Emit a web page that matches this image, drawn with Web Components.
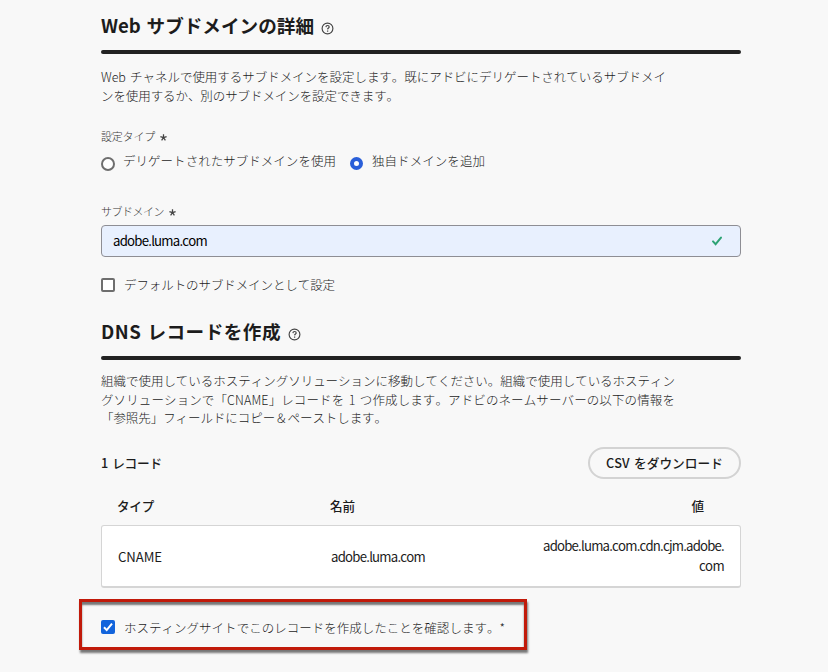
<!DOCTYPE html>
<html lang="ja">
<head>
<meta charset="utf-8">
<title>Web サブドメインの詳細</title>
<style>
html,body{margin:0;background:#f8f8f8}
body{width:828px;height:672px;overflow:hidden;font-family:"Noto Sans CJK JP",sans-serif;color:#1c1c1c}
</style>
</head>
<body>
<subdomain-form></subdomain-form>
<script>
const define = (name, html, setup) => {
  const t = document.createElement('template');
  t.innerHTML = html;
  customElements.define(name, class extends HTMLElement {
    constructor() {
      super();
      this.attachShadow({mode: 'open'}).append(t.content.cloneNode(true));
    }
    connectedCallback() { if (setup) setup(this, this.shadowRoot); }
  });
};

// A single line whose tracking is adjusted to a given measure.
define('text-line', `<style>
:host{display:block;white-space:pre;font-size:12.5px;line-height:19px;font-weight:300;flex:none}
span{display:inline-block;font-kerning:none;word-spacing:1.5px}
</style><span><slot></slot></span>`, (el, root) => {
  const s = root.querySelector('span'), w = +el.getAttribute('measure');
  if (w) s.style.letterSpacing = (w - s.getBoundingClientRect().width) / [...el.textContent].length + 'px';
});

define('help-icon', `<style>:host{display:block;width:13px;height:13px;flex:none}svg{display:block}</style>
<svg width="13" height="13" viewBox="0 0 13 13" fill="none" stroke="#444"><circle cx="6.5" cy="6.5" r="5.4" stroke-width="1.15"/><path d="M4.9 5.1C5 3.9 5.7 3.5 6.6 3.5c1 0 1.6.6 1.6 1.4 0 1.1-1.5 1.2-1.6 2.5" stroke-width="1.2"/><path d="M6.6 8.5v1.2" stroke-width="1.3"/></svg>`);

define('section-title', `<style>
:host{display:block}
div{display:flex;align-items:center;gap:7px;height:32px}
help-icon{margin-top:5px}
hr{height:4px;margin:8px 0 0;border:0;border-radius:2px;background:#222}
::slotted(text-line){font-size:18.6px;font-weight:700;line-height:30px;padding-bottom:2px}
</style><div><slot></slot><help-icon></help-icon></div><hr>`);

define('field-label', `<style>
:host{display:flex;height:16px;gap:5px;align-items:center}
svg{display:block;margin-top:2px}
::slotted(text-line){font-size:11px;line-height:16px;color:#383838}
</style><slot></slot><svg width="7" height="7" viewBox="0 0 7 7" stroke="#444" stroke-width="1.25"><path d="M3.5 3.7V.3M3.5 3.7.4 2.7M3.5 3.7l3.1-1M3.5 3.7 1.6 6.4M3.5 3.7l1.9 2.7"/></svg>`);

define('radio-option', `<style>
:host{display:flex;height:19px}
i{box-sizing:border-box;width:14px;height:14px;border:2px solid #6e6e6e;border-radius:50%;margin:6px 8px 0 0;background:#fff;flex:none}
:host([checked]) i{width:13px;height:13px;border:4px solid #2a5fd9;margin-right:9px}
</style><i></i><slot></slot>`);

define('check-option', `<style>
:host{display:flex;height:19px;align-items:center}
i{box-sizing:border-box;width:14px;height:14px;border:2px solid #6e6e6e;border-radius:2px;margin-right:9px;background:#fff;flex:none}
svg{display:none}
:host([checked]) i{border:0;background:#1264dc}
:host([checked]) svg{display:block}
</style><i><svg width="14" height="14" viewBox="0 0 14 14" fill="none" stroke="#fff" stroke-width="2"><path d="m3 7.3 2.7 2.8L11 3.6"/></svg></i><slot></slot>`);

define('text-input', `<style>
:host{display:flex;box-sizing:border-box;width:640px;height:32px;border:1px solid #8e8e94;border-radius:4px;background:#e8f0fe;align-items:center;justify-content:space-between;padding:0 17px 0 11px}
::slotted(text-line){font-size:13.2px;font-weight:400;color:#000;padding-bottom:1px}
</style><slot></slot><svg width="12" height="10" viewBox="0 0 12 10" fill="none" stroke="#2da374" stroke-width="2" stroke-linecap="round"><path d="m2 5.4 2.6 2.8L10 1.6"/></svg>`);

define('pill-button', `<style>
:host{display:flex;box-sizing:border-box;width:153px;height:32px;border:2px solid #d3d3d3;border-radius:16px;align-items:center;justify-content:center}
::slotted(text-line){font-weight:500;font-size:12.7px;padding-bottom:2px}
</style><slot></slot>`);

define('record-row', `<style>
:host{display:grid;grid-template-columns:213px 1fr auto;align-items:center;box-sizing:border-box;width:640px;padding:0 16px}
:host([head]){height:38px;padding:0 37px 2px 16px}
:host(:not([head])){height:63px;border:1px solid #d5d5d5;border-bottom-width:2px;border-radius:3px;background:#fff}
::slotted(*){font-size:13.2px;font-weight:400}
:host([head]) ::slotted(*){font-size:12.6px;font-weight:500}
</style><slot></slot>`);

define('highlight-frame', `<style>
:host{display:flex;box-sizing:border-box;width:448px;height:51px;border:3px solid #c11a0a;align-items:center;padding:5px 0 0 19px;box-shadow:1px 3px 2px #777,inset 0 3px 2px #777}
</style><slot></slot>`);

define('subdomain-form', `<style>
:host{display:block;box-sizing:border-box;width:828px;height:672px;padding:10px 87px 0 101px}
.p1{padding-top:13px}.l1{margin-top:23px}.radios{display:flex;gap:14px;margin-top:7px}
.l2{margin-top:33px}text-input{margin-top:6px}.default{margin-top:18px}
.t2{margin-top:22px}.p2{padding-top:12px;height:56px}.p2 text-line{line-height:18.7px}
.tools{display:flex;justify-content:space-between;align-items:center;margin-top:19px}
.count{font-size:12.7px;font-weight:500;padding-bottom:1px}
.head{margin-top:8px}.value{text-align:right}
.value text-line{font-size:13.2px;font-weight:400;line-height:20px}
highlight-frame{margin:11px 0 0 -22px}
</style>
<section-title><text-line measure="213">Web サブドメインの詳細</text-line></section-title>
<div class="p1"><text-line measure="565">Web チャネルで使用するサブドメインを設定します。既にアドビにデリゲートされているサブドメイ</text-line><text-line measure="298">ンを使用するか、別のサブドメインを設定できます。</text-line></div>
<field-label class="l1"><text-line measure="54">設定タイプ</text-line></field-label>
<div class="radios"><radio-option><text-line measure="213">デリゲートされたサブドメインを使用</text-line></radio-option><radio-option checked><text-line measure="113">独自ドメインを追加</text-line></radio-option></div>
<field-label class="l2"><text-line measure="63">サブドメイン</text-line></field-label>
<text-input><text-line measure="94">adobe.luma.com</text-line></text-input>
<check-option class="default"><text-line measure="211">デフォルトのサブドメインとして設定</text-line></check-option>
<section-title class="t2"><text-line measure="180">DNS レコードを作成</text-line></section-title>
<div class="p2"><text-line measure="574">組織で使用しているホスティングソリューションに移動してください。組織で使用しているホスティン</text-line><text-line measure="574">グソリューションで「CNAME」レコードを 1 つ作成します。アドビのネームサーバーの以下の情報を</text-line><text-line measure="286">「参照先」フィールドにコピー＆ペーストします。</text-line></div>
<div class="tools"><text-line class="count" measure="61">1 レコード</text-line><pill-button><text-line measure="117">CSV をダウンロード</text-line></pill-button></div>
<record-row head class="head"><text-line measure="37">タイプ</text-line><text-line>名前</text-line><text-line>値</text-line></record-row>
<record-row><text-line measure="44">CNAME</text-line><text-line measure="94">adobe.luma.com</text-line><div class="value"><text-line measure="181">adobe.luma.com.cdn.cjm.adobe.</text-line><text-line measure="25">com</text-line></div></record-row>
<highlight-frame><check-option checked><text-line measure="381">ホスティングサイトでこのレコードを作成したことを確認します。*</text-line></check-option></highlight-frame>`);
</script>
</body>
</html>
